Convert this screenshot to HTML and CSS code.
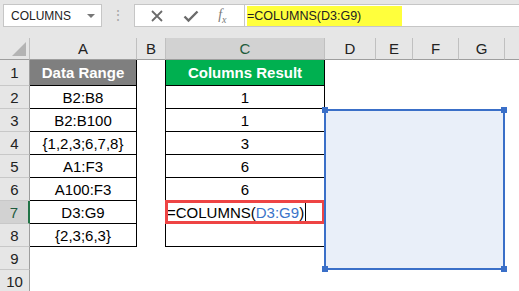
FILE: index.html
```html
<!DOCTYPE html>
<html lang="en">
<head>
    <meta charset="UTF-8">
    <title>COLUMNS</title>
    <link rel="stylesheet" href="styles.css">
</head>
<body>
    <div class="toolbar">
        <div class="name-box">
            <span>COLUMNS</span>
            <span class="caret"></span>
        </div>
        <div class="grip">&#8942;</div>
        <div class="fx-buttons">
            <svg width="14" height="14" viewBox="0 0 14 14"><path d="M2 2 L12 12 M12 2 L2 12" stroke="#6b6b6b" stroke-width="1.8" fill="none"/></svg>
            <svg width="16" height="14" viewBox="0 0 16 14"><path d="M1.5 7.5 L5.5 11.5 L14.5 2.5" stroke="#6b6b6b" stroke-width="2.4" fill="none"/></svg>
            <span class="fx"><i>f</i><sub>x</sub></span>
        </div>
        <div class="formula-input">
            <span class="formula-text">=COLUMNS(D3:G9)</span>
        </div>
    </div>

    <div class="sheet">
        <div class="corner"><span class="tri"></span></div>
        <div class="col-head">A</div>
        <div class="col-head">B</div>
        <div class="col-head active">C</div>
        <div class="col-head">D</div>
        <div class="col-head">E</div>
        <div class="col-head">F</div>
        <div class="col-head">G</div>
        <div class="col-head last"></div>

        <div class="row-head">1</div>
        <div class="cell t-a t-top head-gray">Data Range</div>
        <div class="cell"></div>
        <div class="cell t-c t-top head-green">Columns Result</div>
        <div class="cell"></div><div class="cell"></div><div class="cell"></div><div class="cell"></div><div class="cell"></div>

        <div class="row-head">2</div>
        <div class="cell t-a">B2:B8</div>
        <div class="cell"></div>
        <div class="cell t-c">1</div>
        <div class="cell"></div><div class="cell"></div><div class="cell"></div><div class="cell"></div><div class="cell"></div>

        <div class="row-head">3</div>
        <div class="cell t-a">B2:B100</div>
        <div class="cell"></div>
        <div class="cell t-c">1</div>
        <div class="cell"></div><div class="cell"></div><div class="cell"></div><div class="cell"></div><div class="cell"></div>

        <div class="row-head">4</div>
        <div class="cell t-a">{1,2,3;6,7,8}</div>
        <div class="cell"></div>
        <div class="cell t-c">3</div>
        <div class="cell"></div><div class="cell"></div><div class="cell"></div><div class="cell"></div><div class="cell"></div>

        <div class="row-head">5</div>
        <div class="cell t-a">A1:F3</div>
        <div class="cell"></div>
        <div class="cell t-c">6</div>
        <div class="cell"></div><div class="cell"></div><div class="cell"></div><div class="cell"></div><div class="cell"></div>

        <div class="row-head">6</div>
        <div class="cell t-a">A100:F3</div>
        <div class="cell"></div>
        <div class="cell t-c">6</div>
        <div class="cell"></div><div class="cell"></div><div class="cell"></div><div class="cell"></div><div class="cell"></div>

        <div class="row-head active">7</div>
        <div class="cell t-a">D3:G9</div>
        <div class="cell"></div>
        <div class="cell t-c editing">=COLUMNS(<span class="ref">D3:G9</span>)<span class="cursor"></span><span class="red-box"></span></div>
        <div class="cell"></div><div class="cell"></div><div class="cell"></div><div class="cell"></div><div class="cell"></div>

        <div class="row-head">8</div>
        <div class="cell t-a">{2,3;6,3}</div>
        <div class="cell"></div>
        <div class="cell t-c"></div>
        <div class="cell"></div><div class="cell"></div><div class="cell"></div><div class="cell"></div><div class="cell"></div>

        <div class="row-head">9</div>
        <div class="cell"></div><div class="cell"></div><div class="cell"></div>
        <div class="cell"></div><div class="cell"></div><div class="cell"></div><div class="cell"></div><div class="cell"></div>

        <div class="row-head">10</div>
        <div class="cell"></div><div class="cell"></div><div class="cell"></div>
        <div class="cell"></div><div class="cell"></div><div class="cell"></div><div class="cell"></div><div class="cell"></div>

        <!-- rectangle shape drawn over the sheet -->
        <div class="shape">
            <span class="handle h-tl"></span>
            <span class="handle h-tr"></span>
            <span class="handle h-bl"></span>
            <span class="handle h-br"></span>
        </div>
    </div>
</body>
</html>
```

FILE: styles.css
```css
body {
    margin: 0;
    font-family: "Liberation Sans", Arial, sans-serif;
    background: #ffffff;
    overflow: hidden;
}

/* formula bar */
.toolbar {
    display: flex;
    align-items: flex-start;
    height: 38px;
    background: #e6e6e6;
    box-sizing: border-box;
    padding-top: 4px;
}

.name-box {
    width: 99px;
    height: 23px;
    margin-left: 3px;
    box-sizing: border-box;
    border: 1px solid #c6c6c6;
    background: #ffffff;
    display: flex;
    align-items: center;
    justify-content: space-between;
    padding: 0 6px 0 7px;
    font-size: 12px;
    color: #222222;
}

.caret {
    width: 0;
    height: 0;
    border-left: 4px solid transparent;
    border-right: 4px solid transparent;
    border-top: 4px solid #777777;
}

.grip {
    width: 32px;
    text-align: center;
    color: #a8a8a8;
    font-size: 14px;
    line-height: 23px;
}

.fx-buttons {
    width: 110px;
    height: 23px;
    box-sizing: border-box;
    border: 1px solid #c6c6c6;
    border-right: none;
    background: #ffffff;
    display: flex;
    align-items: center;
    justify-content: space-around;
    padding: 0 8px 0 6px;
}

.fx {
    font-family: "Liberation Serif", serif;
    color: #7a7a7a;
    font-size: 14px;
}

.fx sub {
    font-size: 10px;
    font-style: italic;
}

.formula-input {
    flex: 1;
    height: 23px;
    box-sizing: border-box;
    border: 1px solid #c6c6c6;
    border-right: none;
    background: #ffffff;
    padding: 1px 0 0 2px;
}

.formula-text {
    display: inline-block;
    background: #ffff3c;
    height: 20px;
    line-height: 21px;
    width: 155px;
    font-size: 12.5px;
    color: #222222;
}

/* sheet grid */
.sheet {
    position: relative;
    display: grid;
    grid-template-columns: 30px 107px 29px 159px 51px 37px 46px 46px 14px;
    grid-template-rows: 22px 26px repeat(9, 23px);
    font-size: 15px;
    color: #000000;
}

.corner {
    position: relative;
    background: #e6e6e6;
    border-right: 1px solid #c0c0c0;
    border-bottom: 1px solid #9e9e9e;
}

.tri {
    position: absolute;
    right: 3px;
    bottom: 3px;
    width: 0;
    height: 0;
    border-left: 14px solid transparent;
    border-bottom: 14px solid #b4b4b4;
}

.col-head {
    background: #e6e6e6;
    border-right: 1px solid #c0c0c0;
    border-bottom: 1px solid #9e9e9e;
    display: flex;
    align-items: center;
    justify-content: center;
    color: #222222;
    font-size: 15px;
}

.col-head.active {
    background: #d2d2d2;
    color: #1e5b3c;
}

.col-head.last {
    border-right: none;
}

.row-head {
    background: #e6e6e6;
    border-right: 1px solid #9e9e9e;
    border-bottom: 1px solid #c8c8c8;
    display: flex;
    align-items: center;
    justify-content: center;
    color: #222222;
    font-size: 15px;
}

.row-head.active {
    background: #d2d2d2;
    color: #1e5b3c;
    border-right: 2px solid #217346;
}

.cell {
    position: relative;
    display: flex;
    align-items: center;
    justify-content: center;
    white-space: nowrap;
}

/* bordered tables in columns A and C */
.t-a,
.t-c {
    border-bottom: 1px solid #000000;
    border-right: 1px solid #000000;
}

.t-c {
    border-left: 1px solid #000000;
    margin-left: -1px;
}

.head-gray {
    background: #7f7f7f;
    color: #ffffff;
    font-weight: bold;
}

.head-green {
    background: #00b050;
    color: #ffffff;
    font-weight: bold;
}

.editing {
    justify-content: flex-start;
    padding-left: 1px;
    overflow: visible;
}

.ref {
    color: #3b74c9;
}

.cursor {
    display: inline-block;
    width: 1px;
    height: 18px;
    background: #000000;
    margin-left: 1px;
}

.red-box {
    position: absolute;
    left: -1px;
    top: -1px;
    right: -1px;
    bottom: -1px;
    border: 3px solid #ee4444;
}

.shape {
    position: absolute;
    left: 324px;
    top: 71px;
    width: 181px;
    height: 161px;
    box-sizing: border-box;
    border: 2px solid #3a6fc8;
    background: #e9eff9;
}

.handle {
    position: absolute;
    width: 6px;
    height: 6px;
    background: #3a6fc8;
}

.h-tl { left: -4px; top: -4px; }
.h-tr { right: -4px; top: -4px; }
.h-bl { left: -4px; bottom: -4px; }
.h-br { right: -4px; bottom: -4px; }
```
